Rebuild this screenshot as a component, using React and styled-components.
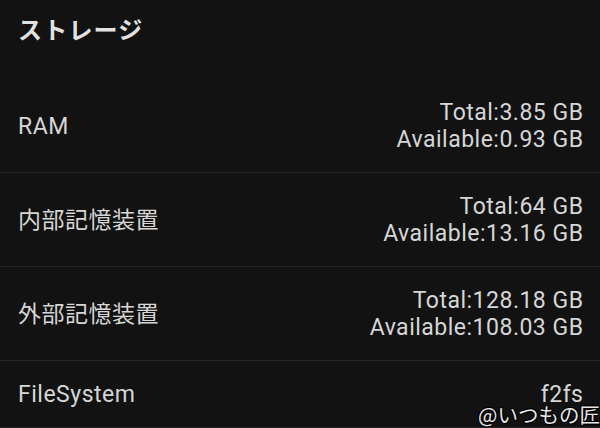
import styled, { createGlobalStyle } from 'styled-components';

const GlobalStyle = createGlobalStyle`
  html, body {
    margin: 0;
    padding: 0;
    background: #121212;
  }
  body {
    font-family: Roboto, "Noto Sans CJK JP", sans-serif;
    color: #d6d6d6;
  }
`;

const rows = [
  { label: 'RAM', values: ['Total:3.85 GB', 'Available:0.93 GB'] },
  { label: '内部記憶装置', values: ['Total:64 GB', 'Available:13.16 GB'] },
  { label: '外部記憶装置', values: ['Total:128.18 GB', 'Available:108.03 GB'] },
  { label: 'FileSystem', values: ['f2fs'] },
];

export default function App() {
  return (
    <>
      <GlobalStyle />
      <Screen>
        <Title>ストレージ</Title>
        <List>
          {rows.map((row) => (
            <Row key={row.label}>
              <Label>{row.label}</Label>
              <Values>
                {row.values.map((v) => (
                  <span key={v}>{v}</span>
                ))}
              </Values>
            </Row>
          ))}
        </List>
        <Watermark>@いつもの匠</Watermark>
      </Screen>
    </>
  );
}

const Screen = styled.div`
  position: relative;
  width: 600px;
  height: 428px;
  overflow: hidden;
  background: #121212;
`;

const Title = styled.h1`
  margin: 0;
  height: 79px;
  padding: 13px 18px 0;
  box-sizing: border-box;
  font-family: "Noto Sans CJK JP", sans-serif;
  font-size: 24px;
  font-weight: 700;
  letter-spacing: 1.2px;
  line-height: 32px;
  color: #e2e2e2;
`;

const List = styled.div`
  display: flex;
  flex-direction: column;
`;

const Row = styled.div`
  display: flex;
  align-items: center;
  justify-content: space-between;
  padding: 20px 17px 19px 18px;
  border-bottom: 1px solid #242424;
  font-size: 23px;
  letter-spacing: 0.5px;
  line-height: 27px;
`;

const Label = styled.div`
  font-family: Roboto, "Noto Sans CJK JP", sans-serif;
`;

const Values = styled.div`
  display: flex;
  flex-direction: column;
  align-items: flex-end;
  margin-right: -0.5px;
`;

const Watermark = styled.div`
  position: absolute;
  right: 0;
  bottom: 3px;
  font-family: "Noto Sans CJK JP", sans-serif;
  font-size: 20.5px;
  line-height: 22px;
  color: #e6e6e6;
  text-shadow: 1px 1px 0 #000, -1px -1px 0 #000, 1px -1px 0 #000, -1px 1px 0 #000;
`;
